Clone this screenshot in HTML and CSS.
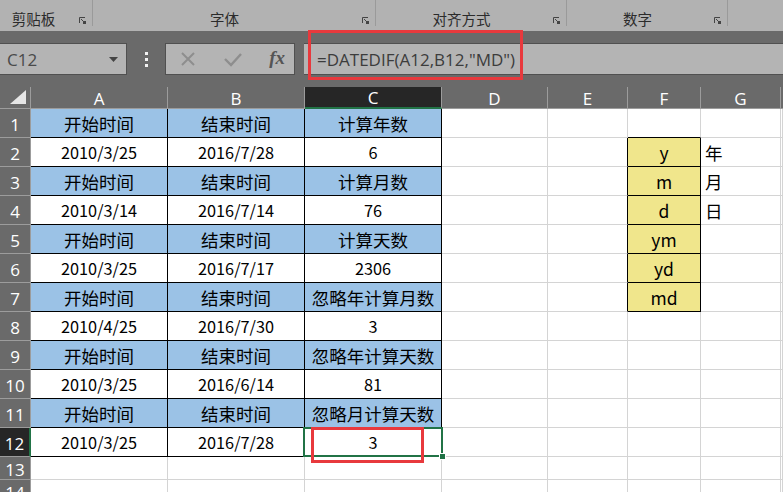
FILE: index.html
```html
<!DOCTYPE html>
<html lang="zh-CN">
<head>
    <meta charset="UTF-8">
    <title>DATEDIF</title>
    <link rel="stylesheet" href="styles.css">
</head>
<body>
    <div class="ribbon">
        <div class="group g1"><span class="group-label">剪贴板</span><svg class="launcher" width="7" height="7" viewBox="0 0 7 7"><path d="M0.5 6V0.5H6" fill="none" stroke="#444"/><path d="M2 2L5 5" stroke="#444"/><rect x="4" y="4" width="3" height="3" fill="#444"/></svg></div>
        <div class="group g2"><span class="group-label">字体</span><svg class="launcher" width="7" height="7" viewBox="0 0 7 7"><path d="M0.5 6V0.5H6" fill="none" stroke="#444"/><path d="M2 2L5 5" stroke="#444"/><rect x="4" y="4" width="3" height="3" fill="#444"/></svg></div>
        <div class="group g3"><span class="group-label">对齐方式</span><svg class="launcher" width="7" height="7" viewBox="0 0 7 7"><path d="M0.5 6V0.5H6" fill="none" stroke="#444"/><path d="M2 2L5 5" stroke="#444"/><rect x="4" y="4" width="3" height="3" fill="#444"/></svg></div>
        <div class="group g4"><span class="group-label">数字</span><svg class="launcher" width="7" height="7" viewBox="0 0 7 7"><path d="M0.5 6V0.5H6" fill="none" stroke="#444"/><path d="M2 2L5 5" stroke="#444"/><rect x="4" y="4" width="3" height="3" fill="#444"/></svg></div>
        <div class="group g5"></div>
    </div>

    <div class="fbar">
        <div class="fbar-row">
            <div class="namebox">
                <span>C12</span>
                <svg width="9" height="5" viewBox="0 0 9 5"><path d="M0 0H9L4.5 5Z" fill="#444"/></svg>
            </div>
            <div class="dots"><i></i><i></i><i></i></div>
            <div class="fx-box">
                <svg width="18" height="18" viewBox="0 0 18 18"><path d="M3 3L15 15M15 3L3 15" stroke="#8e8e8e" stroke-width="2"/></svg>
                <svg width="20" height="18" viewBox="0 0 20 18"><path d="M2 9L8 15L18 4" fill="none" stroke="#8e8e8e" stroke-width="2.4"/></svg>
                <span class="fx">fx</span>
            </div>
            <div class="formula">=DATEDIF(A12,B12,"MD")</div>
        </div>
        <div class="red-box top"></div>
    </div>

    <div class="sheet">
        <div class="corner"><svg width="16" height="14" viewBox="0 0 16 14"><path d="M16 0V14H0Z" fill="#e6e6e6"/></svg></div>
        <div class="colh">A</div>
        <div class="colh">B</div>
        <div class="colh sel-h">C</div>
        <div class="colh">D</div>
        <div class="colh">E</div>
        <div class="colh">F</div>
        <div class="colh">G</div>
        <div class="colh last"></div>

        <div class="rowh">1</div>
        <div class="c t head">开始时间</div><div class="c t head">结束时间</div><div class="c t head">计算年数</div>
        <div class="c"></div><div class="c"></div><div class="c bb"></div><div class="c"></div><div class="c"></div>

        <div class="rowh">2</div>
        <div class="c t num">2010/3/25</div><div class="c t num">2016/7/28</div><div class="c t num">6</div>
        <div class="c"></div><div class="c br"></div><div class="c t key">y</div><div class="c note">年</div><div class="c"></div>

        <div class="rowh">3</div>
        <div class="c t head">开始时间</div><div class="c t head">结束时间</div><div class="c t head">计算月数</div>
        <div class="c"></div><div class="c br"></div><div class="c t key">m</div><div class="c note">月</div><div class="c"></div>

        <div class="rowh">4</div>
        <div class="c t num">2010/3/14</div><div class="c t num">2016/7/14</div><div class="c t num">76</div>
        <div class="c"></div><div class="c br"></div><div class="c t key">d</div><div class="c note">日</div><div class="c"></div>

        <div class="rowh">5</div>
        <div class="c t head">开始时间</div><div class="c t head">结束时间</div><div class="c t head">计算天数</div>
        <div class="c"></div><div class="c br"></div><div class="c t key">ym</div><div class="c"></div><div class="c"></div>

        <div class="rowh">6</div>
        <div class="c t num">2010/3/25</div><div class="c t num">2016/7/17</div><div class="c t num">2306</div>
        <div class="c"></div><div class="c br"></div><div class="c t key">yd</div><div class="c"></div><div class="c"></div>

        <div class="rowh">7</div>
        <div class="c t head">开始时间</div><div class="c t head">结束时间</div><div class="c t head">忽略年计算月数</div>
        <div class="c"></div><div class="c br"></div><div class="c t key">md</div><div class="c"></div><div class="c"></div>

        <div class="rowh">8</div>
        <div class="c t num">2010/4/25</div><div class="c t num">2016/7/30</div><div class="c t num">3</div>
        <div class="c"></div><div class="c"></div><div class="c"></div><div class="c"></div><div class="c"></div>

        <div class="rowh">9</div>
        <div class="c t head">开始时间</div><div class="c t head">结束时间</div><div class="c t head">忽略年计算天数</div>
        <div class="c"></div><div class="c"></div><div class="c"></div><div class="c"></div><div class="c"></div>

        <div class="rowh">10</div>
        <div class="c t num">2010/3/25</div><div class="c t num">2016/6/14</div><div class="c t num">81</div>
        <div class="c"></div><div class="c"></div><div class="c"></div><div class="c"></div><div class="c"></div>

        <div class="rowh">11</div>
        <div class="c t head">开始时间</div><div class="c t head">结束时间</div><div class="c t head">忽略月计算天数</div>
        <div class="c"></div><div class="c"></div><div class="c"></div><div class="c"></div><div class="c"></div>

        <div class="rowh sel-r">12</div>
        <div class="c t num">2010/3/25</div><div class="c t num">2016/7/28</div>
        <div class="c t num active">3<div class="sel"></div><div class="handle"></div><div class="red-box cell"></div></div>
        <div class="c"></div><div class="c"></div><div class="c"></div><div class="c"></div><div class="c"></div>

        <div class="rowh">13</div>
        <div class="c"></div><div class="c"></div><div class="c"></div><div class="c"></div><div class="c"></div><div class="c"></div><div class="c"></div><div class="c"></div>

        <div class="rowh">14</div>
        <div class="c"></div><div class="c"></div><div class="c"></div><div class="c"></div><div class="c"></div><div class="c"></div><div class="c"></div><div class="c"></div>
    </div>
</body>
</html>
```

FILE: styles.css
```css
body {
    margin: 0;
    width: 783px;
    height: 492px;
    overflow: hidden;
    background: #ffffff;
    font-family: "Noto Sans CJK SC", "Noto Sans", sans-serif;
}

/* ribbon group labels */
.ribbon {
    display: flex;
    height: 31px;
    background: #b2b2b2;
}

.group {
    display: flex;
    align-items: flex-start;
    box-sizing: border-box;
    height: 26px;
    padding-right: 6px;
    border-right: 1px solid #9a9a9a;
}

.group-label {
    flex: 1;
    text-align: center;
    font-size: 14.5px;
    line-height: 1;
    padding-top: 12px;
    color: #2b2b2b;
}

.launcher {
    margin-top: 17px;
    margin-left: 6px;
}

.g1 { width: 93px; }
.g1 .group-label { padding-right: 6px; }
.g2 { width: 283px; }
.g3 { width: 191px; }
.g4 { width: 161px; }
.g5 { flex: 1; border-right: none; }

/* formula bar */
.fbar {
    position: relative;
    background: #6a6a6a;
    padding-top: 12px;
    padding-bottom: 12px;
}

.fbar-row {
    display: flex;
    height: 32px;
}

.namebox {
    box-sizing: border-box;
    width: 127px;
    display: flex;
    align-items: center;
    justify-content: space-between;
    padding: 0 8px 0 7px;
    background: #b4b4b4;
    border: 1px solid #505050;
    border-left: none;
    font-family: "Open Sans", "Noto Sans", sans-serif;
    font-size: 17px;
    color: #4a4a4a;
}

.dots {
    width: 38px;
    display: flex;
    flex-direction: column;
    align-items: center;
    justify-content: center;
    gap: 3px;
}

.dots i {
    display: block;
    width: 3px;
    height: 3px;
    background: #f2f2f2;
}

.fx-box {
    box-sizing: border-box;
    width: 130px;
    display: flex;
    align-items: center;
    justify-content: space-between;
    padding: 0 9px 0 13px;
    background: #b4b4b4;
    border: 1px solid #505050;
}

.fx {
    font-family: "Liberation Serif", serif;
    font-style: italic;
    font-weight: bold;
    font-size: 19px;
    color: #555555;
    padding-bottom: 3px;
}

.formula {
    flex: 1;
    box-sizing: border-box;
    margin-left: 9px;
    padding-left: 13px;
    display: flex;
    align-items: center;
    background: #b4b4b4;
    border-top: 1px solid #505050;
    border-bottom: 1px solid #505050;
    font-family: "Open Sans", "Noto Sans", sans-serif;
    font-size: 17px;
    color: #3c3c3c;
}

.red-box {
    position: absolute;
    box-sizing: border-box;
    border: 3px solid #e8393d;
}

.red-box.top {
    left: 308px;
    top: -1px;
    width: 215px;
    height: 50px;
}

/* sheet grid */
.sheet {
    display: grid;
    grid-template-columns: 31px 137px 137px 137px 106px 80px 73px 80px 1fr;
    grid-template-rows: 22px repeat(12, 29px) 23px 23px;
    font-size: 17.5px;
}

.corner,
.colh,
.rowh {
    box-sizing: border-box;
    background: #6a6a6a;
    color: #ffffff;
    font-family: "Open Sans", "Noto Sans", sans-serif;
    display: flex;
    align-items: center;
    justify-content: center;
}

.corner {
    border-right: 1px solid #9c9c9c;
    border-bottom: 1px solid #9c9c9c;
    justify-content: flex-end;
    align-items: flex-end;
    padding: 0 4px 4px 0;
}

.colh {
    border-right: 1px solid #9c9c9c;
    border-bottom: 1px solid #9c9c9c;
    font-size: 17px;
    padding-top: 1px;
}

.colh.last { border-right: none; }

.colh.sel-h {
    background: #262626;
    border-bottom: 2px solid #217346;
}

.rowh {
    border-right: 1px solid #9c9c9c;
    border-bottom: 1px solid #9c9c9c;
    font-size: 17px;
    padding-top: 2px;
}

.rowh.sel-r {
    background: #262626;
    border-right: 2px solid #217346;
}

.c {
    box-sizing: border-box;
    border-right: 1px solid #d4d4d4;
    border-bottom: 1px solid #d4d4d4;
    display: flex;
    align-items: center;
    justify-content: center;
    color: #000000;
    white-space: nowrap;
}

.c.t {
    border-right-color: #000000;
    border-bottom-color: #000000;
}

.c.num { font-size: 16.3px; }

.c.bb { border-bottom-color: #000000; }
.c.br { border-right-color: #000000; }

.head { background: #9bc2e6; }
.key { background: #f0e68c; }

.note {
    justify-content: flex-start;
    padding-left: 4px;
}

.active { position: relative; }

.sel {
    position: absolute;
    left: -2px;
    top: -1px;
    right: -2px;
    bottom: -1px;
    border: 2px solid #217346;
}

.handle {
    position: absolute;
    right: -5px;
    bottom: -4px;
    width: 5px;
    height: 5px;
    background: #217346;
    border: 1px solid #ffffff;
}

.red-box.cell {
    left: 6px;
    top: -1px;
    width: 113px;
    height: 36px;
}
```
